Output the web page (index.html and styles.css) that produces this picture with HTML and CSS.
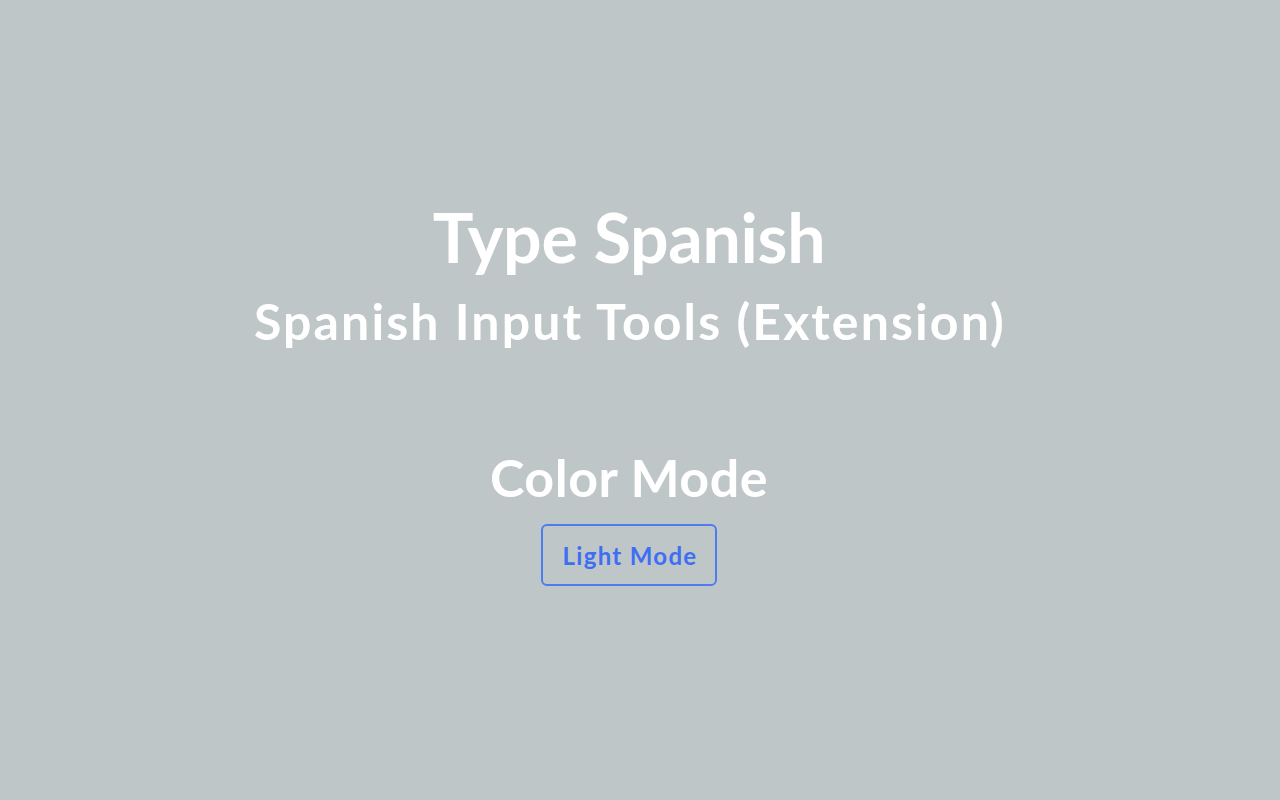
FILE: index.html
```html
<!DOCTYPE html>
<html lang="en">
<head>
<meta charset="utf-8">
<title>Type Spanish</title>
<link rel="stylesheet" href="styles.css">
</head>
<body>
<main class="page">
  <h1 class="title">Type Spanish</h1>
  <h2 class="subtitle">Spanish Input Tools (Extension)</h2>
  <h3 class="mode-heading">Color Mode</h3>
  <button class="mode-btn" type="button">Light Mode</button>
</main>
</body>
</html>
```
FILE: styles.css
```css
html, body {
  margin: 0;
  padding: 0;
  height: 100%;
}
body {
  background: #bfc6c8;
  font-family: Lato, "Open Sans", sans-serif;
  color: #ffffff;
}
.page {
  box-sizing: border-box;
  height: 100vh;
  padding: 0 22px 11px 0;
  display: flex;
  flex-direction: column;
  align-items: center;
  justify-content: center;
}
.title {
  margin: 0;
  font-size: 68px;
  font-weight: 700;
  line-height: 1;
  letter-spacing: -0.3px;
}
.subtitle {
  margin: 25px 0 0;
  font-size: 50px;
  font-weight: 700;
  line-height: 1;
  letter-spacing: 2.1px;
  padding-left: 2px;
}
.mode-heading {
  margin: 105px 0 0;
  font-size: 52px;
  font-weight: 700;
  line-height: 1;
  letter-spacing: 0.5px;
}
.mode-btn {
  margin-top: 21px;
  box-sizing: border-box;
  width: 176px;
  height: 62px;
  padding: 0 0 0 2px;
  background: transparent;
  border: 2px solid #4d7cf0;
  border-radius: 6px;
  color: #3e6ef3;
  font-family: inherit;
  font-size: 24px;
  font-weight: 700;
  letter-spacing: 1.3px;
  cursor: pointer;
}
```
